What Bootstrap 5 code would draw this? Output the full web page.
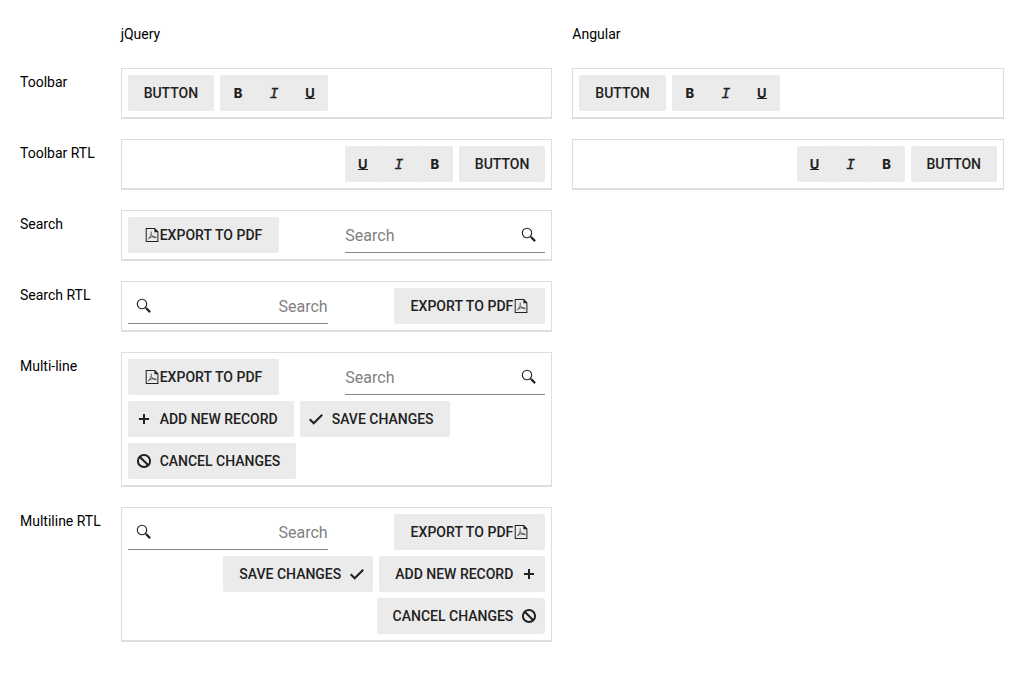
<!DOCTYPE html>
<html lang="en">
<head>
<meta charset="utf-8">
<meta name="viewport" content="width=device-width, initial-scale=1">
<title>Toolbar</title>
<link href="https://cdn.jsdelivr.net/npm/bootstrap@5.3.0/dist/css/bootstrap.min.css" rel="stylesheet">
<style>
  body { font-family: Roboto, sans-serif; font-size: 14px; line-height: 28px; color: #000; background: #fff; }
  .demo-grid { grid-template-columns: 80.64px 1fr 1fr; gap: 20px; padding: 20px; }
  .demo-grid > span { white-space: nowrap; }
  .tb { min-height: 51px; padding: 6px; gap: 6px; border: 1px solid #dedede; border-bottom-width: 2px; align-content: flex-start; }
  .tb .btn {
    --bs-btn-bg: #ebebeb; --bs-btn-color: #212121; --bs-btn-border-width: 0; --bs-btn-border-radius: 2px;
    --bs-btn-hover-bg: #e0e0e0; --bs-btn-hover-color: #212121;
    --bs-btn-padding-x: 16px; --bs-btn-padding-y: 0; --bs-btn-font-size: 14px; --bs-btn-font-weight: 500; --bs-btn-line-height: 20px;
    height: 36px; display: inline-flex; align-items: center; justify-content: center; text-transform: uppercase; white-space: nowrap;
    letter-spacing: -.006px;
  }
  .tb svg { width: 16px; height: 16px; flex: none; fill: currentColor; }
  .tb .btn > svg.lead-icon { margin-inline: -8px 8px; }
  .tb > .btn:first-child { letter-spacing: -.02px; }
  .tb .btn.pdf-btn { padding-inline-end: 16.3px; letter-spacing: .035px; }
  .tb .fmt .btn { width: 36px; flex: none; padding: 0; }
  .fmt .btn:not(:first-child):not(:last-child) { border-radius: 0; }
  [dir=ltr] .fmt .btn:first-child { border-radius: 2px 0 0 2px; }
  [dir=ltr] .fmt .btn:last-child { border-radius: 0 2px 2px 0; }
  .glyph-b { font: 800 13px/16px Inter, sans-serif; }
  .glyph-i { font: italic 400 15px/16px "Liberation Mono", monospace; -webkit-text-stroke: .3px; padding-top: 3px; }
  .glyph-u { font: 700 13px/10px Inter, sans-serif; border-bottom: 1px solid; }
  .search { width: 200px; height: 36px; margin-inline-start: auto; padding-inline-end: 8px; border-bottom: 1px solid #8a8a8a; color: #212121; }
  .search input { font-size: 16px; line-height: 24px; min-width: 0; padding: 2px 0 0; color: #212121; outline: 0; }
  .search input::placeholder { color: #7f7f7f; opacity: 1; }
</style>
</head>
<body>
<svg class="d-none" xmlns="http://www.w3.org/2000/svg">
  <symbol id="pdf" viewBox="0 0 16 16"><path fill-rule="evenodd" d="M1.700 1h9.300l3.400 3.400V15H1.700zM2.700 2v12h10.700V5.200h-3V2z"/><path d="M7.200 4.500c.4 3-.8 5.500-3 7.800M7.400 7.500c.8 2 2.300 3.300 5 3.200M4.900 11c1.500-1 4-1.600 7.300-1" fill="none" stroke="currentColor" stroke-width=".7"/></symbol>
  <symbol id="find" viewBox="0 0 16 16"><circle cx="6" cy="6" r="4.700" fill="none" stroke="currentColor" stroke-width="1.100"/><path d="M9.300 9.300l1.500 1.500" stroke="currentColor" stroke-width="1.300"/><path d="M10.200 10.200l3.900 3.900" stroke="currentColor" stroke-width="2.200"/></symbol>
  <symbol id="plus" viewBox="0 0 16 16"><path d="M7 3h2v4h4v2H9v4H7V9H3V7h4z"/></symbol>
  <symbol id="check" viewBox="0 0 16 16"><path d="M1.700 8.300l4 4 8.500-8.500" fill="none" stroke="currentColor" stroke-width="2"/></symbol>
  <symbol id="cancel" viewBox="0 0 16 16"><circle cx="8" cy="8" r="6.100" fill="none" stroke="currentColor" stroke-width="2"/><path d="M3.700 3.700l8.600 8.600" stroke="currentColor" stroke-width="2"/></symbol>
</svg>
<main class="demo-grid d-grid">
  <span></span><span>jQuery</span><span>Angular</span>

  <span>Toolbar</span>
  <div dir="ltr"><div class="tb d-flex flex-wrap">
    <button class="btn">Button</button>
    <div class="fmt d-flex"><button class="btn"><span class="glyph-b">B</span></button><button class="btn"><span class="glyph-i">I</span></button><button class="btn"><span class="glyph-u">U</span></button></div>
  </div></div>
  <div dir="ltr"><div class="tb d-flex flex-wrap">
    <button class="btn">Button</button>
    <div class="fmt d-flex"><button class="btn"><span class="glyph-b">B</span></button><button class="btn"><span class="glyph-i">I</span></button><button class="btn"><span class="glyph-u">U</span></button></div>
  </div></div>

  <span>Toolbar RTL</span>
  <div dir="rtl"><div class="tb d-flex flex-wrap">
    <button class="btn">Button</button>
    <div class="fmt d-flex"><button class="btn"><span class="glyph-b">B</span></button><button class="btn"><span class="glyph-i">I</span></button><button class="btn"><span class="glyph-u">U</span></button></div>
  </div></div>
  <div dir="rtl"><div class="tb d-flex flex-wrap">
    <button class="btn">Button</button>
    <div class="fmt d-flex"><button class="btn"><span class="glyph-b">B</span></button><button class="btn"><span class="glyph-i">I</span></button><button class="btn"><span class="glyph-u">U</span></button></div>
  </div></div>

  <span>Search</span>
  <div dir="ltr"><div class="tb d-flex flex-wrap">
    <button class="btn pdf-btn"><svg><use href="#pdf"/></svg>Export to PDF</button>
    <div class="search d-flex align-items-center"><input class="border-0 flex-fill bg-transparent" placeholder="Search"><svg><use href="#find"/></svg></div>
  </div></div>
  <span></span>

  <span>Search RTL</span>
  <div dir="rtl"><div class="tb d-flex flex-wrap">
    <button class="btn pdf-btn"><svg><use href="#pdf"/></svg>Export to PDF</button>
    <div class="search d-flex align-items-center"><input class="border-0 flex-fill bg-transparent" placeholder="Search"><svg><use href="#find"/></svg></div>
  </div></div>
  <span></span>

  <span>Multi-line</span>
  <div dir="ltr"><div class="tb d-flex flex-wrap">
    <button class="btn pdf-btn"><svg><use href="#pdf"/></svg>Export to PDF</button>
    <div class="search d-flex align-items-center"><input class="border-0 flex-fill bg-transparent" placeholder="Search"><svg><use href="#find"/></svg></div>
    <button class="btn"><svg class="lead-icon"><use href="#plus"/></svg>Add new record</button>
    <button class="btn"><svg class="lead-icon"><use href="#check"/></svg>Save Changes</button>
    <button class="btn"><svg class="lead-icon"><use href="#cancel"/></svg>Cancel changes</button>
  </div></div>
  <span></span>

  <span>Multiline RTL</span>
  <div dir="rtl"><div class="tb d-flex flex-wrap">
    <button class="btn pdf-btn"><svg><use href="#pdf"/></svg>Export to PDF</button>
    <div class="search d-flex align-items-center"><input class="border-0 flex-fill bg-transparent" placeholder="Search"><svg><use href="#find"/></svg></div>
    <button class="btn"><svg class="lead-icon"><use href="#plus"/></svg>Add new record</button>
    <button class="btn"><svg class="lead-icon"><use href="#check"/></svg>Save Changes</button>
    <button class="btn"><svg class="lead-icon"><use href="#cancel"/></svg>Cancel changes</button>
  </div></div>
  <span></span>
</main>
<script src="https://cdn.jsdelivr.net/npm/bootstrap@5.3.0/dist/js/bootstrap.bundle.min.js"></script>
</body>
</html>
